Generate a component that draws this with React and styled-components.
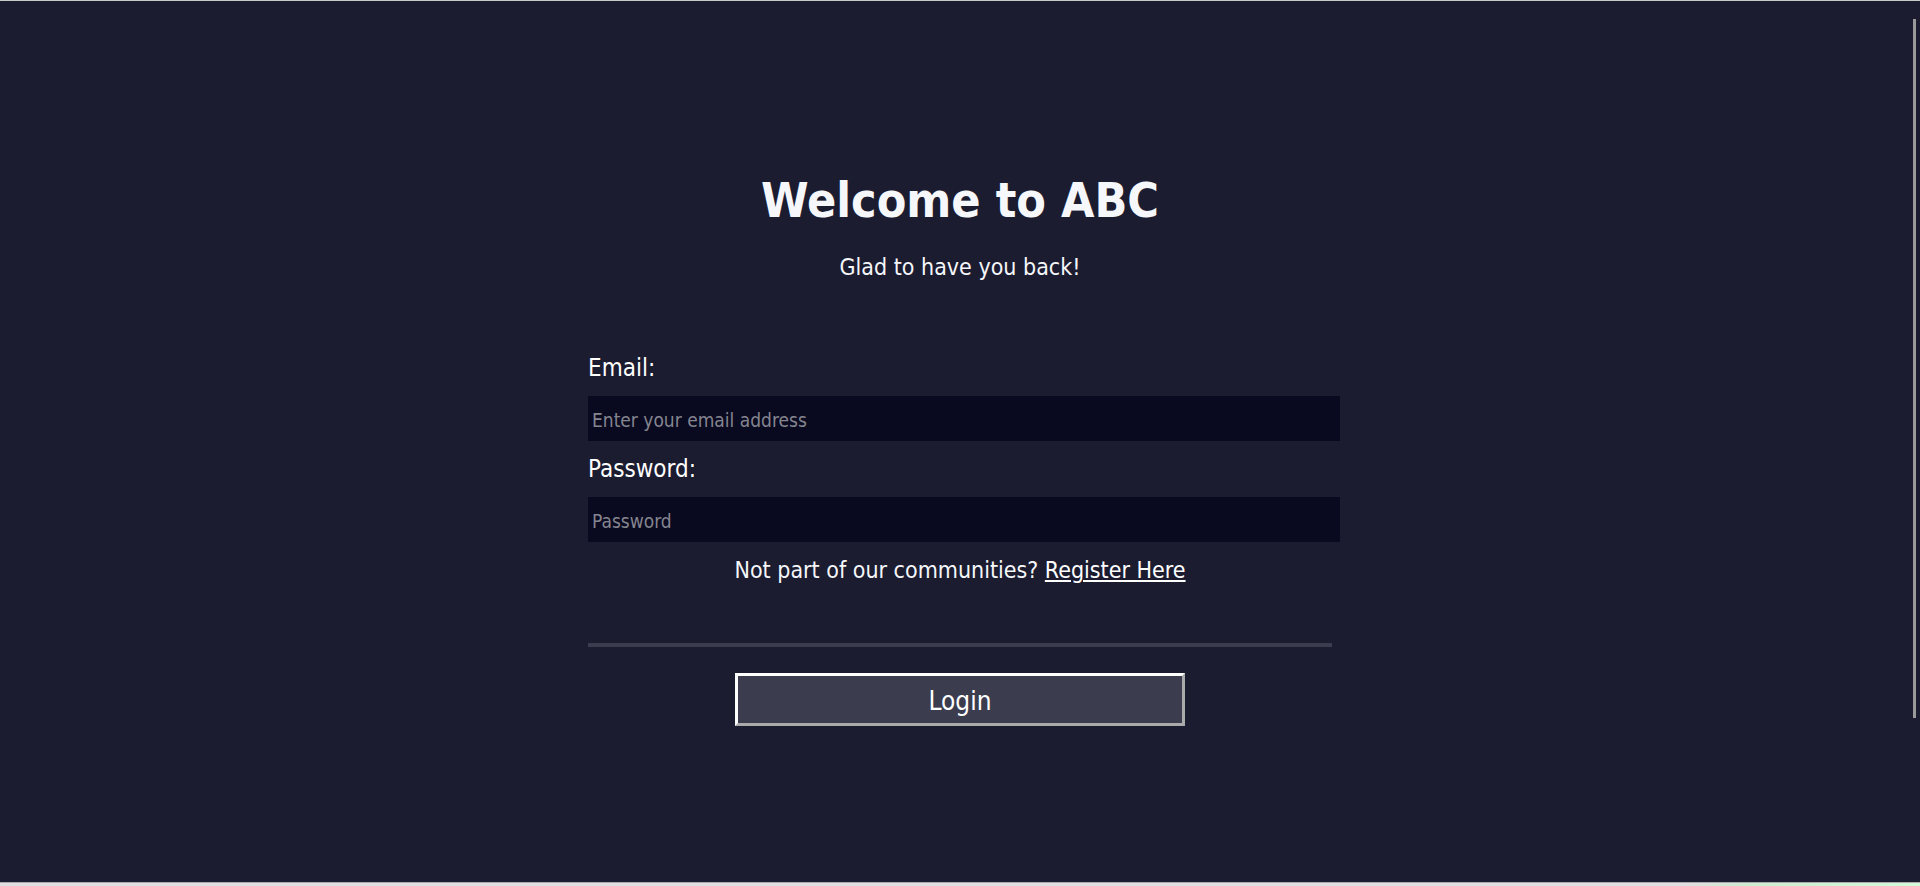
import React from "react";
import styled, { createGlobalStyle } from "styled-components";

const GlobalStyle = createGlobalStyle`
  * { box-sizing: border-box; }
  body {
    margin: 0;
    background: #1c1c30;
    color: #ffffff;
    font-family: "DejaVu Sans Condensed", Tahoma, "DejaVu Sans", sans-serif;
    font-size: 23px;
    line-height: 33px;
  }
`;

const Page = styled.div`
  position: relative;
  min-height: 100vh;
  display: flex;
  flex-direction: column;
  border-top: 1px solid #c4ccc8;
`;

const ScrollThumb = styled.div`
  position: absolute;
  top: 18px;
  right: 4px;
  width: 3px;
  height: 699px;
  background: #999999;
`;

const Content = styled.main`
  flex: 1;
  width: 100%;
  max-width: 744px;
  margin: 0 auto;
  padding: 170px 0 40px;
  display: flex;
  flex-direction: column;
  align-items: center;
`;

const BottomEdge = styled.div`
  height: 4px;
  border-top: 1px solid #aca8b0;
  background: linear-gradient(to right, #e0dede 88%, #ccecd0 91%, #d4fad8 100%);
`;

const Title = styled.h1`
  margin: 0;
  color: #f5f7fa;
  font-size: 48px;
  line-height: 58px;
`;

const Subtitle = styled.p`
  margin: 22px 0 68px;
  color: #f5f7fa;
`;

const Form = styled.form`
  width: 100%;
  display: flex;
  flex-direction: column;
  align-items: center;
`;

const Field = styled.div`
  align-self: stretch;
  margin-bottom: 12px;
`;

const Label = styled.label`
  display: block;
  margin-bottom: 11px;
  font-size: 24px;
`;

const Input = styled.input`
  display: block;
  width: calc(100% + 8px);
  height: 45px;
  padding: 3px 4px 0;
  border: 0;
  background: #090920;
  color: #ffffff;
  font-family: inherit;
  font-size: 19px;

  &::placeholder {
    color: #85858f;
    opacity: 1;
  }
`;

const Prompt = styled.p`
  margin: 0 0 56px;
  color: #f5f7fa;
`;

const RegisterLink = styled.a`
  color: #ffffff;
  text-decoration-thickness: 2px;
  text-underline-offset: 2px;
`;

const Divider = styled.hr`
  width: 100%;
  height: 4px;
  margin: 0 0 26px;
  border: 0;
  background: #3c3c4f;
`;

const LoginButton = styled.button`
  width: 450px;
  max-width: 100%;
  height: 53px;
  padding: 2px 0 0;
  border: 3px solid;
  border-color: #ffffff #aaaaaa #aaaaaa #ffffff;
  background: #3c3c4f;
  color: #ffffff;
  font-family: inherit;
  font-size: 26px;
`;

const fields = [
  { id: "email", label: "Email:", type: "email", placeholder: "Enter your email address" },
  { id: "password", label: "Password:", type: "password", placeholder: "Password" },
];

export default function App() {
  return (
    <>
      <GlobalStyle />
      <Page>
        <Content>
          <Title>Welcome to ABC</Title>
          <Subtitle>Glad to have you back!</Subtitle>
          <Form onSubmit={(event) => event.preventDefault()}>
            {fields.map(({ id, label, type, placeholder }) => (
              <Field key={id}>
                <Label htmlFor={id}>{label}</Label>
                <Input id={id} type={type} placeholder={placeholder} />
              </Field>
            ))}
            <Prompt>
              Not part of our communities? <RegisterLink href="#register">Register Here</RegisterLink>
            </Prompt>
            <Divider />
            <LoginButton type="submit">Login</LoginButton>
          </Form>
        </Content>
        <BottomEdge />
        <ScrollThumb aria-hidden="true" />
      </Page>
    </>
  );
}
